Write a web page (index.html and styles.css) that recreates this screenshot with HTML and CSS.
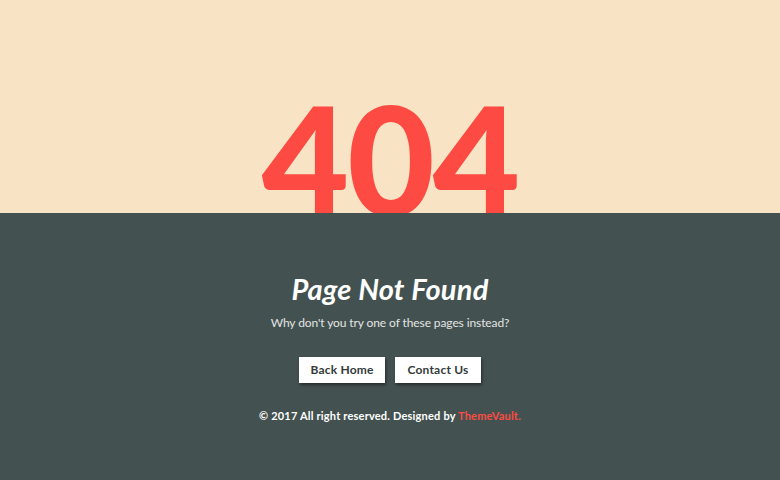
FILE: index.html
```html
<!DOCTYPE html>
<html>
<head>
<meta charset="utf-8">
<link rel="stylesheet" href="styles.css">
</head>
<body>
<div class="top">
  <h1 class="code">404</h1>
</div>
<div class="bottom">
  <h2 class="title">Page Not Found</h2>
  <p class="sub">Why don't you try one of these pages instead?</p>
  <div class="buttons">
    <a class="btn" href="#">Back Home</a>
    <a class="btn" href="#">Contact Us</a>
  </div>
  <p class="footer">© 2017 All right reserved. Designed by <span class="brand">ThemeVault.</span></p>
</div>
</body>
</html>
```
FILE: styles.css
```css
html, body {
  margin: 0;
  padding: 0;
  height: 100%;
}
body {
  font-family: Lato, "Open Sans", sans-serif;
  background: #435250;
  overflow: hidden;
}
.top {
  height: 213px;
  background: #f8e4c4;
  display: flex;
  justify-content: center;
  align-items: flex-end;
  overflow: hidden;
}
.code {
  margin: 0 0 -20px 0;
  font-size: 151px;
  font-weight: 900;
  line-height: 1;
  color: #fd4b43;
  letter-spacing: -2px;
}
.bottom {
  display: flex;
  flex-direction: column;
  align-items: center;
  padding-top: 61px;
}
.title {
  margin: 0;
  font-size: 29px;
  font-style: italic;
  font-weight: 700;
  color: #ffffff;
  line-height: 30px;
  letter-spacing: 0.2px;
}
.sub {
  margin: 11px 0 0 0;
  font-size: 12px;
  color: #e4e4e4;
  line-height: 16px;
  letter-spacing: -0.1px;
}
.buttons {
  display: flex;
  gap: 10px;
  margin-top: 26px;
}
.btn {
  display: block;
  width: 86px;
  height: 26px;
  line-height: 26px;
  text-align: center;
  background: #ffffff;
  color: #333b3a;
  font-size: 12px;
  font-weight: 700;
  letter-spacing: 0.2px;
  text-decoration: none;
  box-shadow: 1px 2px 3px rgba(0,0,0,0.45);
}
.footer {
  margin: 26px 0 0 0;
  font-size: 11px;
  font-weight: 700;
  color: #ffffff;
  line-height: 14px;
  letter-spacing: 0.2px;
}
.brand {
  color: #fd4b43;
}
```
